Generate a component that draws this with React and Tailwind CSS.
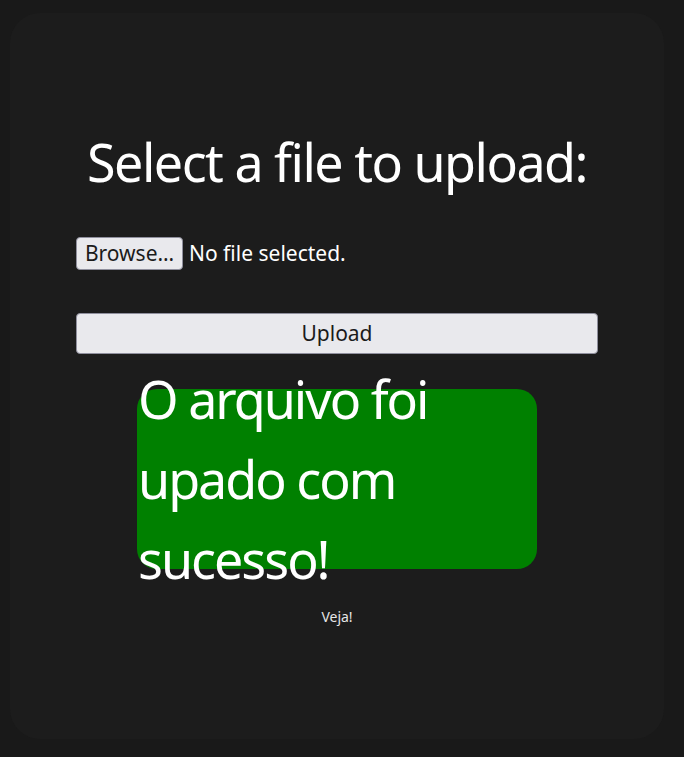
import React from 'react';

function App() {
  return (
    <div className="min-h-screen bg-[#191919] pl-[10px] pr-[20px] pt-[13px] pb-[18px] font-['Noto_Sans',sans-serif] text-white">
      {/* Upload card */}
      <div className="h-[726px] rounded-[30px] bg-[#1c1c1c] px-[66px] pt-[118px] flex flex-col">
        <h1 className="text-center text-[52px] leading-[62px] tracking-[-1.5px] font-normal">
          Select a file to upload:
        </h1>

        <form className="mt-[44px] flex flex-col" onSubmit={(e) => e.preventDefault()}>
          <div className="flex items-center h-[33px] gap-[6px]">
            <span className="h-[33px] w-[107px] flex items-center justify-center rounded-[4px] border border-[#8f8f9d] bg-[#e9e9ed] text-[#1b1b1b] text-[21px] leading-none">
              Browse…
            </span>
            <span className="text-[21px] leading-none">No file selected.</span>
          </div>

          <button
            type="submit"
            className="mt-[43px] h-[41px] w-full rounded-[4px] border border-[#8f8f9d] bg-[#e9e9ed] text-[#1b1b1b] text-[21px]"
          >
            Upload
          </button>
        </form>

        {/* Success message */}
        <div className="mt-[35px] mx-auto w-[400px] h-[180px] rounded-[20px] bg-[#008000] flex items-center">
          <p className="text-[52px] leading-[80px] tracking-[-2px] pl-[1px]">
            O arquivo foi upado com sucesso!
          </p>
        </div>

        <p className="mt-[37px] text-center text-[14px] text-[#e6e6e6]">Veja!</p>
      </div>
    </div>
  );
}

export default App;
